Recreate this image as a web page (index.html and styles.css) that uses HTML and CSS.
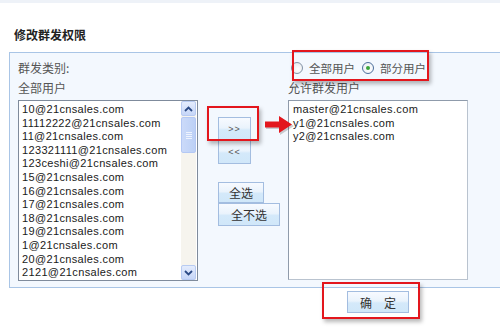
FILE: index.html
```html
<!DOCTYPE html>
<html>

<head>
  <title>修改群发权限</title>
  <meta charset="utf-8">
  <link rel="stylesheet" href="styles.css">
</head>

<body>
  <div class="page">
    <div class="topbar"></div>
    <h2 class="title">修改群发权限</h2>

    <div class="panel">
      <!-- All users -->
      <div class="col col-side">
        <div class="label">群发类别:</div>
        <div class="label">全部用户</div>
        <div class="listbox listbox-all">
          <div class="items">
            <div>10@21cnsales.com</div>
            <div>11112222@21cnsales.com</div>
            <div>11@21cnsales.com</div>
            <div>123321111@21cnsales.com</div>
            <div>123ceshi@21cnsales.com</div>
            <div>15@21cnsales.com</div>
            <div>16@21cnsales.com</div>
            <div>17@21cnsales.com</div>
            <div>18@21cnsales.com</div>
            <div>19@21cnsales.com</div>
            <div>1@21cnsales.com</div>
            <div>20@21cnsales.com</div>
            <div>2121@21cnsales.com</div>
          </div>
          <div class="scrollbar">
            <div class="sb-btn">
              <svg width="9" height="6" viewBox="0 0 9 6"><path d="M1 5 L4.5 1.5 L8 5" fill="none" stroke="#2b4a86" stroke-width="1.8"/></svg>
            </div>
            <div class="sb-thumb"><span></span><span></span><span></span><span></span></div>
            <div class="sb-track"></div>
            <div class="sb-btn">
              <svg width="9" height="6" viewBox="0 0 9 6"><path d="M1 1 L4.5 4.5 L8 1" fill="none" stroke="#2b4a86" stroke-width="1.8"/></svg>
            </div>
          </div>
        </div>
      </div>

      <!-- Move / select buttons -->
      <div class="col col-mid">
        <div class="move-group">
          <button class="btn btn-move btn-add">&gt;&gt;</button>
          <button class="btn btn-move">&lt;&lt;</button>
        </div>
        <div class="select-group">
          <button class="btn btn-all">全选</button>
          <button class="btn btn-none">全不选</button>
        </div>
      </div>

      <!-- Allowed users -->
      <div class="col col-side">
        <div class="radios">
          <label class="radio"><span class="dot"></span>全部用户</label>
          <label class="radio"><span class="dot checked"></span>部分用户</label>
        </div>
        <div class="label">允许群发用户</div>
        <div class="listbox listbox-allowed">
          <div class="items">
            <div>master@21cnsales.com</div>
            <div>y1@21cnsales.com</div>
            <div>y2@21cnsales.com</div>
          </div>
        </div>
      </div>
    </div>

    <div class="footer">
      <button class="btn btn-ok">确　定</button>
    </div>

    <!-- annotation marks -->
    <div class="mark mark-radios"></div>
    <div class="mark mark-add"></div>
    <div class="mark mark-ok"></div>
    <svg class="arrow" width="34" height="24" viewBox="0 0 34 24">
      <path d="M3 10 H17 V4 L31 13 L17 22 V16 H3 Z" fill="rgba(0,0,0,0.18)"/>
      <path d="M2 8.5 H16 V3 L29 11.5 L16 20 V14.5 H2 Z" fill="#e3161d"/>
    </svg>
  </div>
</body>

</html>
```

FILE: styles.css
```css
:root {
  --panel-bg: #f3f8fe;
  --panel-border: #a9c5e6;
  --btn-border: #a3bde0;
  --mark-red: #e3161d;
  --text-color: #222;
  --label-color: #555;
}

body {
  margin: 0;
  background: #fff;
  font-family: "Liberation Sans", Arial, "Noto Sans CJK SC", sans-serif;
  font-size: 12px;
  color: var(--text-color);
}

.page {
  position: relative;
  width: 500px;
  height: 328px;
  overflow: hidden;
}

.topbar {
  height: 3px;
  background: #eef2f8;
}

.title {
  margin: 24px 0 0 14px;
  font-family: "Noto Sans CJK SC", sans-serif;
  font-size: 12px;
  line-height: 16px;
  font-weight: bold;
  color: #222;
}

/* --- Panel --- */
.panel {
  display: flex;
  margin: 9px 0 0 9px;
  padding: 5px 0 6px 8px;
  background: var(--panel-bg);
  border: 1px solid var(--panel-border);
  border-right: none;
}

.col-side {
  width: 180px;
}

.col-mid {
  width: 70px;
  margin-left: 20px;
}

.label {
  font-family: "Noto Sans CJK SC", sans-serif;
  line-height: 20px;
  color: var(--label-color);
}

.listbox {
  display: flex;
  margin-top: 2px;
  background: #fff;
  border: 1px solid #7f8b9c;
  box-sizing: border-box;
}

.listbox-all {
  height: 181px;
}

.listbox-allowed {
  height: 180px;
  border-color: #8f9bab #b9c3cf #b9c3cf #8f9bab;
}

.items {
  flex: 1;
  padding: 2px 0 0 3px;
  font-size: 11px;
  letter-spacing: 0.35px;
  line-height: 13.6px;
  color: #1a1a1a;
  overflow: hidden;
  white-space: nowrap;
}

.listbox-allowed .items {
  padding-left: 4px;
}

/* fake scrollbar */
.scrollbar {
  display: flex;
  flex-direction: column;
  width: 15px;
  margin-right: 1px;
  background: #f6f4ee;
}

.sb-btn {
  display: flex;
  align-items: center;
  justify-content: center;
  height: 15px;
  border: 1px solid #b8cbf2;
  border-radius: 2px;
  background: linear-gradient(#e4ecfd, #c6d6f8);
  box-sizing: border-box;
}

.sb-thumb {
  display: flex;
  flex-direction: column;
  align-items: center;
  justify-content: center;
  gap: 1px;
  height: 36px;
  margin-top: 1px;
  border: 1px solid #b4c8f4;
  border-radius: 2px;
  background: linear-gradient(90deg, #cbdaf9, #bcd0f6);
  box-sizing: border-box;
}

.sb-thumb span {
  width: 6px;
  height: 1px;
  background: #eef3fe;
}

.sb-track {
  flex: 1;
}

/* radios */
.radios {
  display: flex;
  align-items: center;
  height: 20px;
  margin-left: 3px;
  gap: 7px;
  font-family: "Noto Sans CJK SC", sans-serif;
  font-size: 11.5px;
  color: var(--label-color);
}

.radio {
  display: flex;
  align-items: center;
  gap: 6px;
}

.dot {
  position: relative;
  width: 12px;
  height: 12px;
  border: 1px solid #8293a6;
  border-radius: 50%;
  background: radial-gradient(circle at 60% 60%, #fff, #dfe3e8);
  box-sizing: border-box;
}

.dot.checked {
  border-color: #4d6f9c;
  background: radial-gradient(circle at 60% 60%, #fff, #e6ebf1);
}

.dot.checked::after {
  content: '';
  position: absolute;
  left: 3px;
  top: 3px;
  width: 4px;
  height: 4px;
  border-radius: 50%;
  background: #3aa53a;
}

/* --- Buttons --- */
.btn {
  display: block;
  padding: 0;
  font-family: "Noto Sans CJK SC", sans-serif;
  font-size: 12px;
  color: #333;
  border: 1px solid var(--btn-border);
  background: linear-gradient(#f7faff 0%, #eaf3fc 45%, #d4e9fa 55%, #d0e7f9 100%);
  cursor: pointer;
}

.move-group {
  margin-top: 59px;
}

.btn-move {
  width: 33px;
  height: 24px;
  font-family: "Liberation Sans", Arial, sans-serif;
  font-size: 9px;
  letter-spacing: 1px;
  color: #555;
}

.btn-move + .btn-move {
  height: 23px;
  border-top: none;
}

.select-group {
  margin-top: 18px;
}

.btn-all {
  width: 46px;
  height: 21px;
}

.btn-none {
  width: 62px;
  height: 23px;
}

.footer {
  padding: 3px 0 0 347px;
}

.btn-ok {
  width: 62px;
  height: 22px;
}

/* --- Annotation marks --- */
.mark {
  position: absolute;
  border: 2px solid var(--mark-red);
  box-shadow: 2px 3px 4px rgba(0, 0, 0, 0.28);
  box-sizing: border-box;
}

.mark-radios {
  left: 292px;
  top: 50px;
  width: 137px;
  height: 31px;
}

.mark-add {
  left: 207px;
  top: 106px;
  width: 52px;
  height: 35px;
}

.mark-ok {
  left: 322px;
  top: 282px;
  width: 98px;
  height: 37px;
}

.arrow {
  position: absolute;
  left: 263px;
  top: 113px;
}
```
